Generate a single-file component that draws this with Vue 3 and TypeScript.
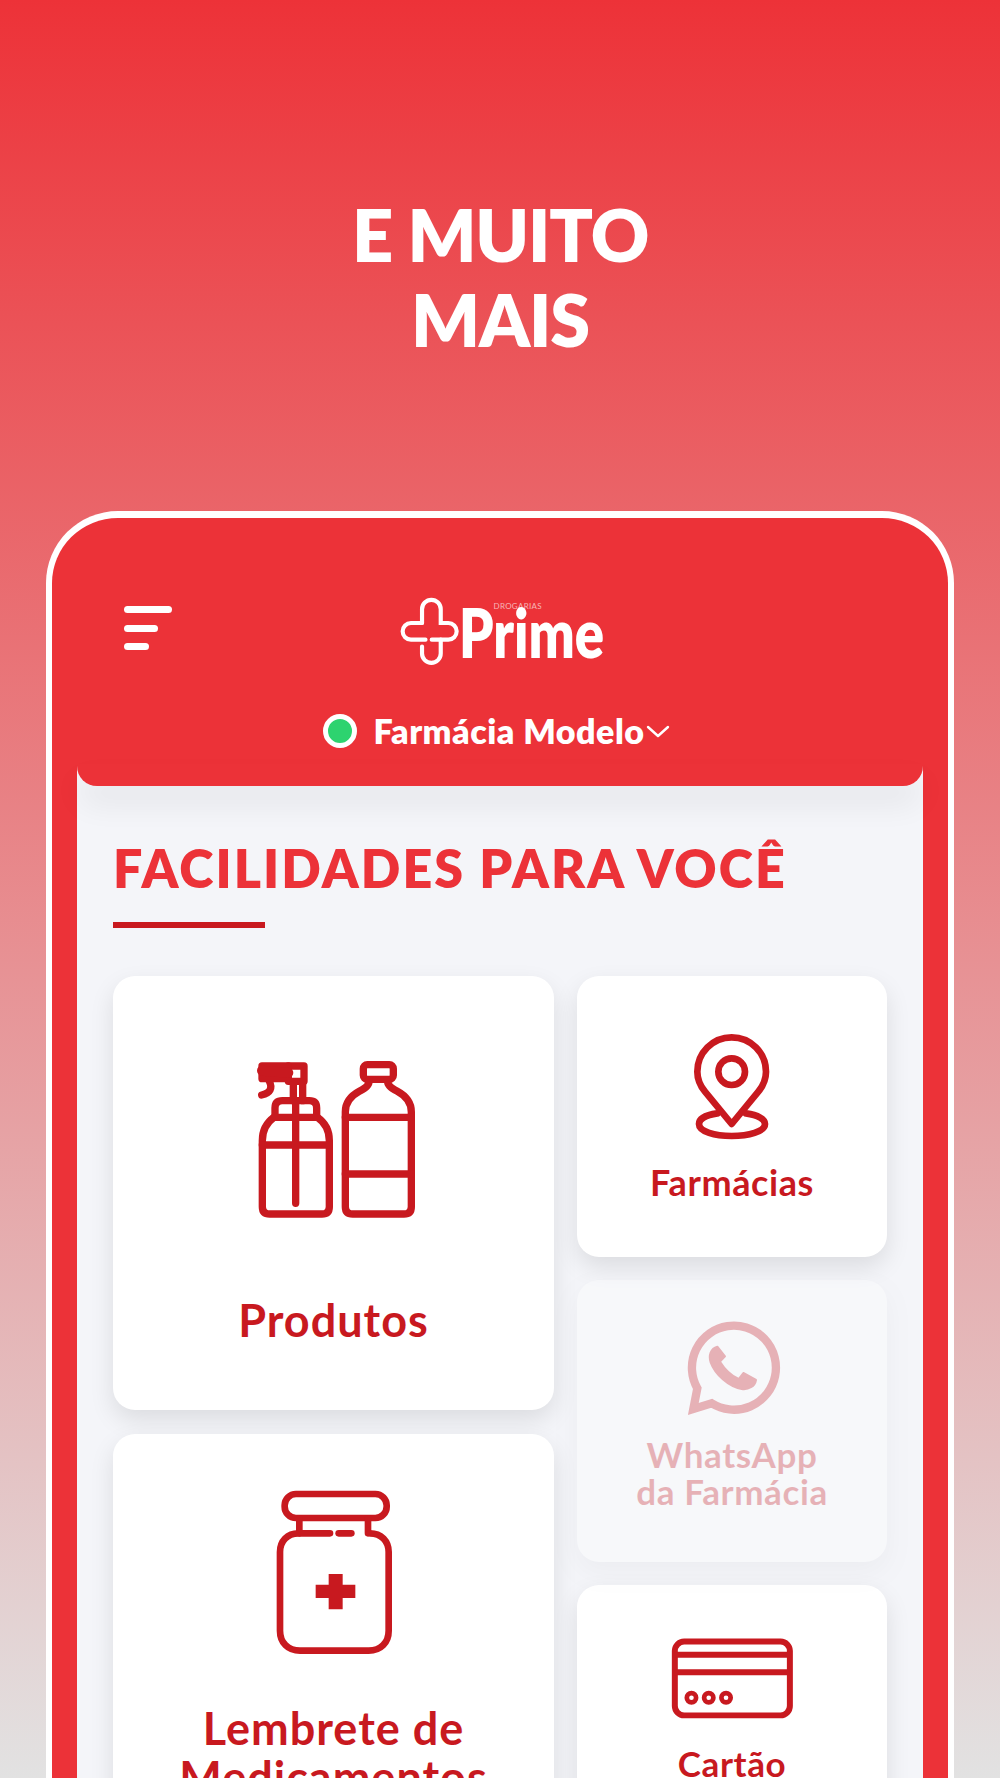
<script setup lang="ts">
const storeName = 'Farmácia Modelo'
</script>

<template>
  <div class="screen">
    <h1 class="headline">E MUITO<br />MAIS</h1>

    <div class="phone">
      <div class="phone-top">
        <div class="top-row">
          <div class="burger">
            <span class="bar bar-1"></span>
            <span class="bar bar-2"></span>
            <span class="bar bar-3"></span>
          </div>
          <div class="logo">
            <svg class="logo-cross" viewBox="50 50 190 205" fill="none" stroke="#fff" stroke-width="12" stroke-linecap="round">
              <path d="M122 128V88a27 27 0 0 1 54 0V128H198a24 24 0 0 1 0 48H150" />
              <path d="M122 128H90a24 24 0 0 0 0 48H132" />
              <path d="M122 196V216a27 27 0 0 0 54 0V176" />
            </svg>
            <div class="logo-word">
              <span class="logo-small">DROGARIAS</span>
              <span class="logo-prime">Prime</span>
            </div>
          </div>
          <div></div>
        </div>
        <div class="status">
          <span class="dot"></span>
          <span class="store">{{ storeName }}</span>
          <svg class="chevron" viewBox="0 0 24 13" fill="none" stroke="#fff" stroke-width="2.4" stroke-linecap="round" stroke-linejoin="round">
            <path d="M2 2l10 9L22 2" />
          </svg>
        </div>
      </div>

      <div class="panel">
        <div class="panel-cap"></div>
        <div class="panel-body">
          <h2 class="section-title">FACILIDADES PARA VOCÊ</h2>
          <div class="underline"></div>

          <div class="tiles">
            <div class="col col-left">
              <div class="tile tile-produtos">
                <svg class="icon" width="200" height="190" viewBox="0 0 600 570" fill="none" stroke="#c8191f" stroke-width="22" stroke-linecap="round" stroke-linejoin="round">
                  <rect x="400" y="74" width="90" height="44" rx="12" />
                  <path d="M418 120c0 14-8 22-30 34-26 14-42 34-42 62V500q0 22 22 22H522q22 0 22-22V216c0-28-16-48-42-62-22-12-30-20-30-34" />
                  <path d="M346 232H544M346 402H544" />
                  <path d="M132 232C110 248 97 272 97 302V500q0 22 22 22H276q22 0 22-22V302c0-30-13-54-36-70" />
                  <path d="M135 232V204q0-22 22-22H238q22 0 22 22V232M132 232H262M97 315H298" />
                  <path d="M197 182V490M190 130V182M218 130V182" />
                  <path d="M175 78H222V124H175Z" />
                  <path d="M175 78H96V116H175M116 120C130 145 120 160 95 165" />
                  <path d="M96 92L175 98" stroke-width="30" />
                </svg>
                <span class="label label-lg label-produtos">Produtos</span>
              </div>
              <div class="tile tile-lembrete">
                <svg class="icon" width="180" height="190" viewBox="0 0 540 570" fill="none" stroke="#c8191f" stroke-width="20" stroke-linecap="round" stroke-linejoin="round">
                  <rect x="104" y="72" width="306" height="72" rx="34" />
                  <path d="M148 146V190M354 146V190" />
                  <path d="M240 190H145C112 190 90 214 90 246V482C90 518 114 542 150 542H356C392 542 416 518 416 482V246C416 214 394 190 360 190" />
                  <path d="M266 190H304" />
                  <path d="M236 312H278V344H316V384H278V418H236V384H197V344H236Z" fill="#c8191f" stroke="none" />
                </svg>
                <span class="label label-lg label-lembrete">Lembrete de<br />Medicamentos</span>
              </div>
            </div>

            <div class="col col-right">
              <div class="tile tile-farmacias">
                <svg class="icon" width="150" height="130" viewBox="0 0 450 390" fill="none" stroke="#c8191f" stroke-width="20" stroke-linecap="round" stroke-linejoin="round">
                  <path d="M215 312L135 215C118 194 112 174 112 155A103 103 0 0 1 318 155C318 174 312 194 295 215Z" />
                  <circle cx="215" cy="155" r="40" />
                  <path d="M172 280C135 285 117 298 117 312C117 335 165 348 215 348S315 335 315 312C315 298 295 285 258 280" />
                </svg>
                <span class="label label-md label-farmacias">Farmácias</span>
              </div>
              <div class="tile tile-whats">
                <svg class="icon" width="150" height="130" viewBox="0 0 450 390" fill="none" stroke="#c8191f" stroke-width="25" stroke-linejoin="miter">
                  <path d="M112 268A126 126 0 1 1 155 313L100 330Z" />
                  <path d="M172 143C152 148 145 170 152 190C165 226 205 262 245 270C265 273 285 262 288 243L250 222L236 240C215 230 195 212 180 188L195 172Z" fill="#c8191f" stroke="#c8191f" stroke-width="6" stroke-linejoin="round" />
                </svg>
                <span class="label label-md label-whats">WhatsApp<br />da Farmácia</span>
              </div>
              <div class="tile tile-cartao">
                <svg class="icon" width="200" height="133" viewBox="0 0 600 400" fill="none" stroke="#c8191f" stroke-width="18">
                  <rect x="104" y="128" width="346" height="222" rx="28" />
                  <path d="M104 168H450M104 220H450" />
                  <circle cx="154" cy="297" r="14" stroke-width="14" />
                  <circle cx="206" cy="297" r="14" stroke-width="14" />
                  <circle cx="258" cy="297" r="14" stroke-width="14" />
                </svg>
                <span class="label label-md label-cartao">Cartão</span>
              </div>
            </div>
          </div>
        </div>
      </div>
    </div>
  </div>
</template>

<style>
html,
body {
  margin: 0;
  padding: 0;
}
</style>

<style scoped>
.screen {
  width: 1000px;
  height: 1778px;
  overflow: hidden;
  box-sizing: border-box;
  padding-top: 192px;
  background: linear-gradient(to bottom, #ed3238 0%, #e2e2e2 100%);
  font-family: Lato, 'Open Sans', sans-serif;
}
.headline {
  margin: 0;
  height: 319px;
  text-align: center;
  color: #fff;
  font-size: 72px;
  line-height: 85px;
  font-weight: 800;
  letter-spacing: -1.2px;
}
.phone {
  width: 908px;
  box-sizing: border-box;
  margin-left: 46px;
  padding: 0 25px;
  border: 6px solid #fff;
  border-top-width: 7px;
  border-bottom: none;
  border-radius: 72px 72px 0 0;
  background: #ec3238;
}
.phone-top {
  height: 246px;
  box-sizing: border-box;
  padding-top: 80px;
}
.top-row {
  display: grid;
  grid-template-columns: 1fr auto 1fr;
  height: 67px;
  padding-left: 47px;
  padding-right: 50px;
}
.burger {
  display: flex;
  flex-direction: column;
  gap: 11.5px;
  margin-top: 8px;
}
.bar {
  display: block;
  height: 7px;
  border-radius: 4px;
  background: #fff;
}
.bar-1 {
  width: 48px;
}
.bar-2 {
  width: 34px;
}
.bar-3 {
  width: 25px;
}
.logo {
  display: flex;
  gap: 0;
}
.logo-cross {
  width: 66px;
  height: 71px;
  margin-top: -2px;
  margin-right: -4px;
}
.logo-word {
  position: relative;
  width: 142px;
}
.logo-small {
  display: block;
  position: absolute;
  left: 35px;
  top: 4px;
  font-size: 8px;
  line-height: 9px;
  color: #f7b5b7;
  letter-spacing: 0.3px;
  white-space: nowrap;
}
.logo-prime {
  display: block;
  margin-top: 13px;
  font-size: 68px;
  line-height: 42px;
  font-weight: 800;
  color: #fff;
  white-space: nowrap;
  transform: scaleX(0.8);
  transform-origin: left center;
}
.status {
  display: flex;
  align-items: center;
  justify-content: center;
  margin-top: 49px;
  height: 34px;
  margin-left: -7px;
}
.dot {
  width: 24px;
  height: 24px;
  border: 5px solid #fff;
  border-radius: 50%;
  background: #2dd36f;
}
.store {
  margin-left: 16px;
  font-size: 34px;
  line-height: 34px;
  font-weight: 800;
  letter-spacing: 0.5px;
  color: #fff;
  white-space: nowrap;
}
.chevron {
  width: 24px;
  height: 13px;
  margin-left: 1px;
}
.panel {
  background: #f4f5f9;
  height: 1015px;
}
.panel-cap {
  height: 22px;
  border-radius: 0 0 20px 20px;
  background: #ec3238;
  box-shadow: 0 18px 30px rgba(0, 0, 0, 0.07);
}
.panel-body {
  padding: 52px 36px 0;
}
.section-title {
  margin: 0;
  font-size: 52px;
  line-height: 60px;
  font-weight: 800;
  letter-spacing: 2.1px;
  color: #ec3238;
  white-space: nowrap;
}
.underline {
  width: 152px;
  height: 6px;
  margin-top: 24px;
  background: #c8191f;
}
.tiles {
  display: flex;
  gap: 23px;
  margin-top: 48px;
}
.col {
  display: flex;
  flex-direction: column;
}
.col-left {
  width: 441px;
  gap: 24px;
}
.col-right {
  width: 310px;
  gap: 23px;
}
.tile {
  display: flex;
  flex-direction: column;
  align-items: center;
  box-sizing: border-box;
  border-radius: 22px;
  background: #fff;
  box-shadow: 0 10px 24px rgba(0, 0, 0, 0.1);
  text-align: center;
}
.icon {
  display: block;
  flex: none;
}
.label {
  font-weight: 700;
  color: #c8191f;
}
.label-lg {
  font-size: 45px;
  line-height: 49px;
  letter-spacing: 1px;
}
.label-md {
  font-size: 35px;
  line-height: 37px;
  letter-spacing: 0.6px;
}
.tile-produtos {
  height: 434px;
  padding-top: 64px;
}
.tile-produtos .icon {
  margin-left: -7px;
}
.label-produtos {
  margin-top: 66px;
}
.tile-lembrete {
  height: 500px;
  padding-top: 36px;
}
.tile-lembrete .icon {
  margin-left: 13px;
}
.label-lembrete {
  margin-top: 44px;
}
.tile-farmacias {
  height: 281px;
  padding-top: 44px;
}
.tile-farmacias .icon,
.tile-whats .icon {
  margin-left: 6px;
}
.label-farmacias {
  margin-top: 14px;
  font-size: 36px;
}
.tile-whats {
  height: 282px;
  padding-top: 19px;
  opacity: 0.3;
}
.label-whats {
  margin-top: 7px;
}
.tile-cartao {
  height: 300px;
  padding-top: 14px;
}
.tile-cartao .icon {
  margin-left: 16px;
}
.label-cartao {
  margin-top: 13px;
}
</style>
